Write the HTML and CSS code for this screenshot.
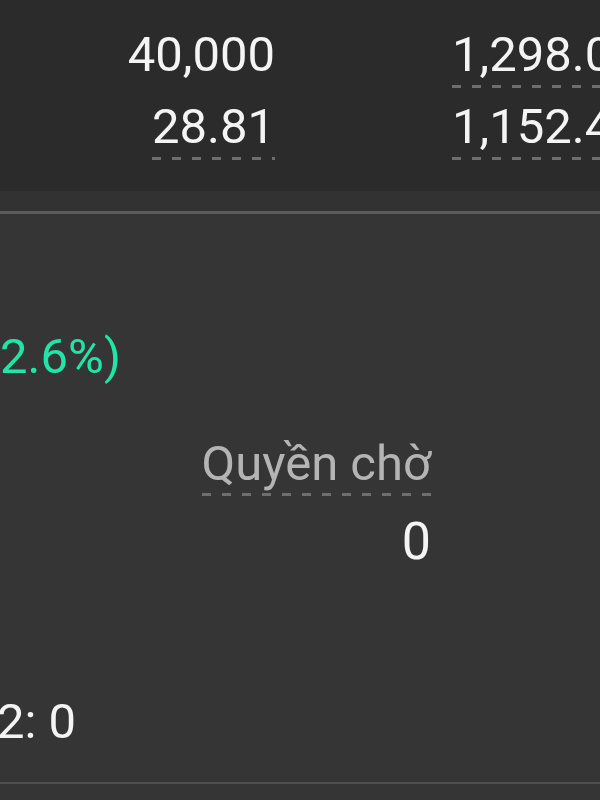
FILE: index.html
```html
<!DOCTYPE html>
<html lang="vi">
<head>
    <meta charset="UTF-8">
    <meta name="viewport" content="width=device-width, initial-scale=1.0">
    <title>Tài sản</title>
    <link rel="stylesheet" href="styles.css">
</head>
<body>

    <!-- quote table -->
    <div class="quote-panel">
        <div class="cell cell-end">40,000</div>
        <div class="cell cell-start dashed">1,298.0</div>
        <div class="cell cell-end dashed">28.81</div>
        <div class="cell cell-start dashed">1,152.4</div>
    </div>
    <div class="quote-gap"></div>

    <!-- summary -->
    <div class="summary">
        <div class="change">2.6%)</div>

        <div class="pending">
            <div class="pending-label dashed">Quyền chờ</div>
            <div class="pending-value">0</div>
        </div>

        <div class="t2"><span>2: 0</span></div>
    </div>
    <div class="divider"></div>

</body>
</html>
```

FILE: styles.css
```css
body {
    margin: 0;
    height: 800px;
    overflow: hidden;
    background-color: #353535;
    color: #f4f4f4;
    font-family: Roboto, "Noto Sans", sans-serif;
}

.dashed {
    background: repeating-linear-gradient(to right, #6e6e6e 0 9px, transparent 9px 20px) left bottom / 100% 3px no-repeat;
}

.quote-panel {
    height: 191px;
    box-sizing: border-box;
    padding-top: 26px;
    background-color: #2b2b2b;
    display: grid;
    grid-template-columns: 275px 1fr;
    column-gap: 177px;
    row-gap: 10px;
    align-content: start;
}

.cell {
    font-size: 49px;
    line-height: 57px;
    padding-bottom: 5px;
    white-space: nowrap;
}

.cell-end {
    justify-self: end;
}

.cell-start {
    justify-self: start;
    width: 160px;
}

.quote-gap {
    height: 20px;
    background-color: #323232;
    border-bottom: 3px solid #5b5b5b;
}

.summary {
    height: 568px;
    box-sizing: border-box;
    padding-top: 114px;
    display: flex;
    flex-direction: column;
}

.change {
    color: #1fe6a8;
    font-size: 49px;
    line-height: 57px;
    white-space: nowrap;
}

.pending {
    align-self: flex-end;
    margin-right: 169px;
    margin-top: 50px;
    display: flex;
    flex-direction: column;
    align-items: flex-end;
}

.pending-label {
    color: #b4b4b4;
    font-size: 49px;
    line-height: 57px;
    padding-bottom: 4px;
    white-space: nowrap;
}

.pending-value {
    margin-top: 15px;
    font-size: 52px;
    line-height: 61px;
}

.t2 {
    width: 76px;
    margin-top: 121px;
    display: flex;
    justify-content: flex-end;
    font-size: 49px;
    line-height: 57px;
    white-space: nowrap;
}

.divider {
    height: 2px;
    background-color: #4f4f4f;
}
```
